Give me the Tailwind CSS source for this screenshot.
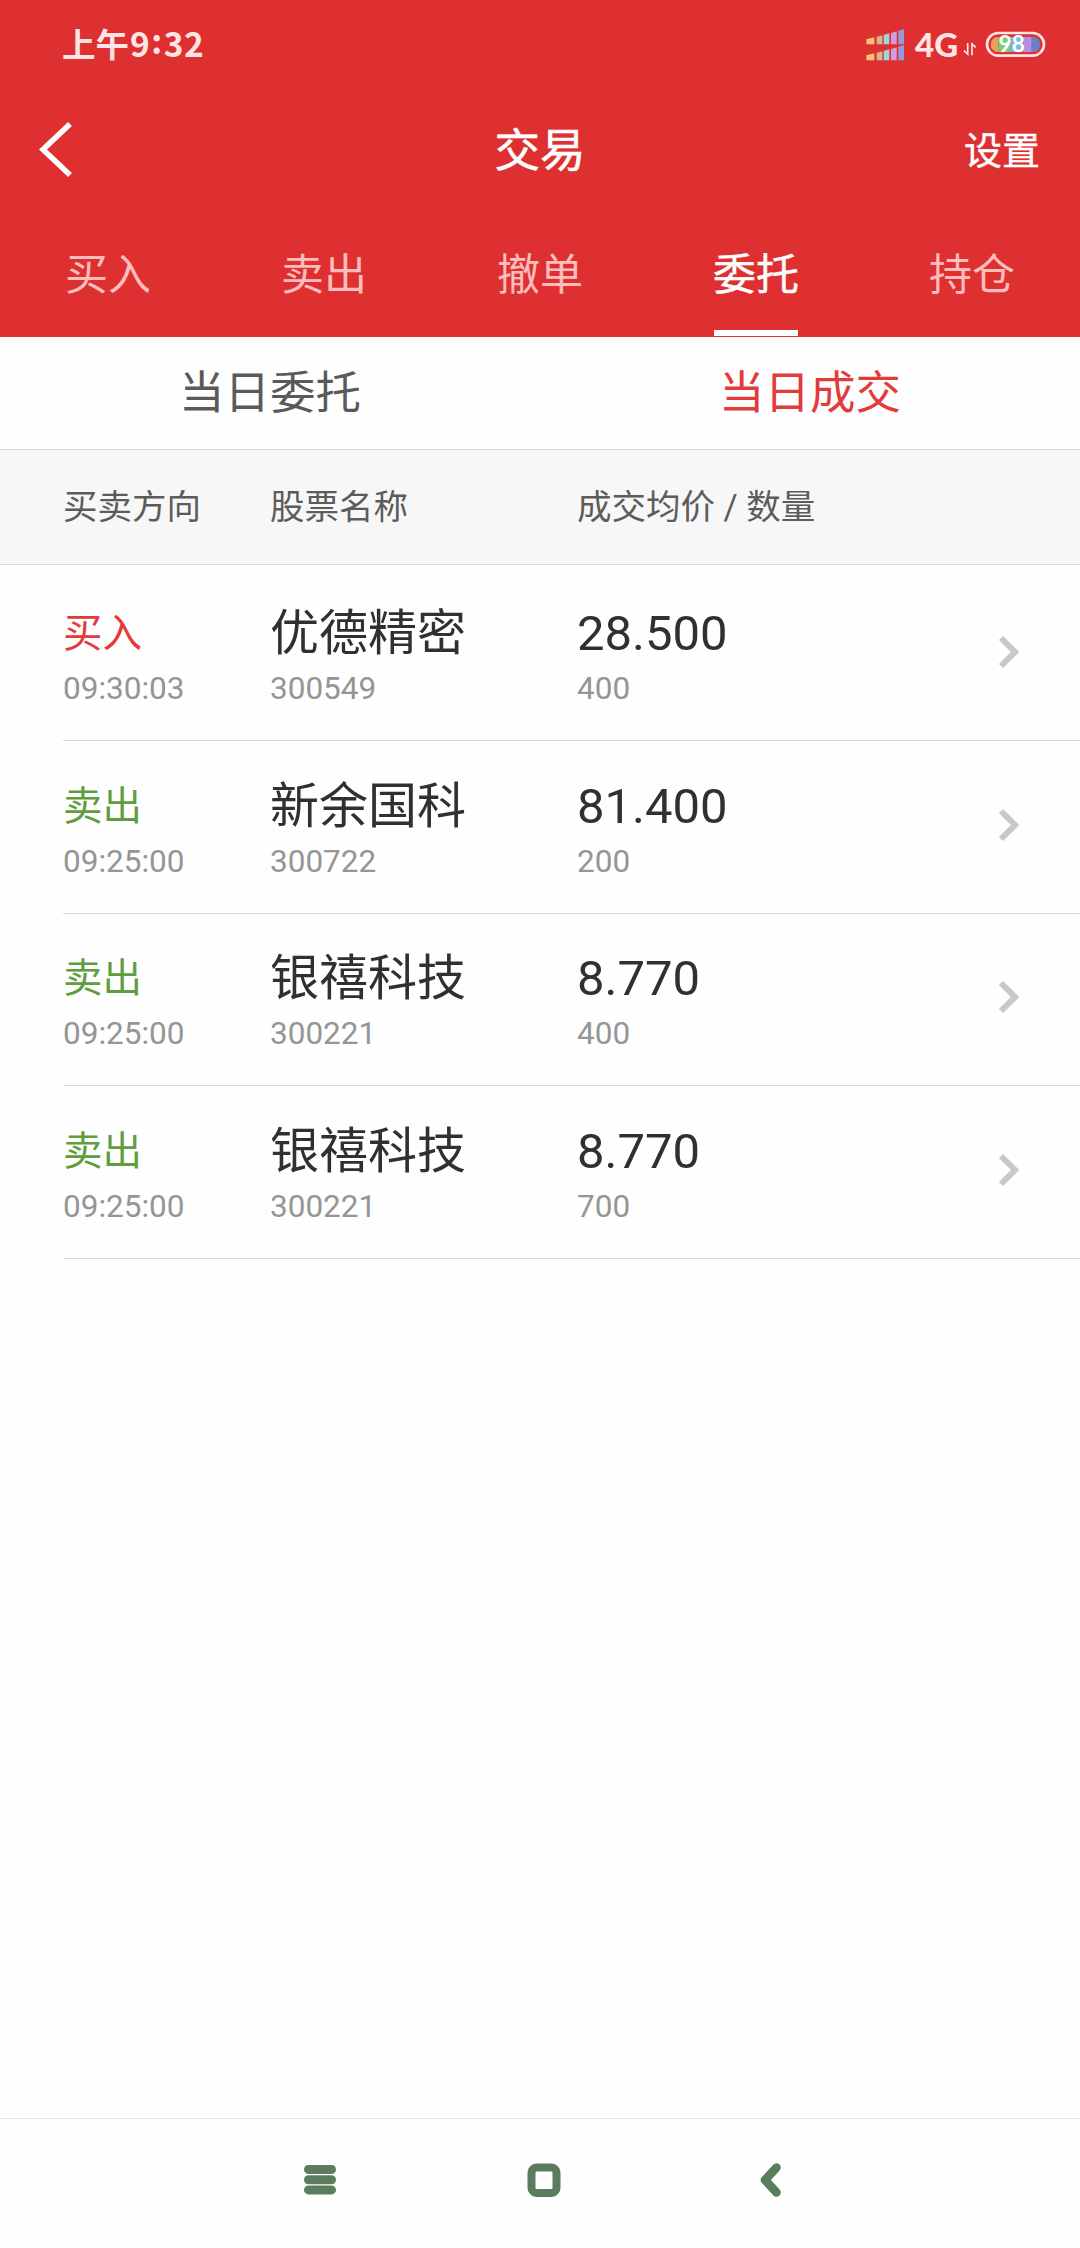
<!DOCTYPE html>
<html lang="zh-CN">
<head>
    <meta charset="UTF-8">
    <meta name="viewport" content="width=device-width, initial-scale=1.0">
    <title>交易</title>
    <script src="https://cdn.jsdelivr.net/npm/@tailwindcss/browser@4"></script>
</head>
<body class="bg-[#fefefe] font-[Roboto,'Noto_Sans_CJK_SC',sans-serif]">
    <div class="w-[1080px] h-[2248px] flex flex-col overflow-hidden">

        <header class="h-[337px] shrink-0 bg-[#df3031] text-white">
            <!-- status bar -->
            <div class="h-[90px] flex items-center justify-between pl-[62px] pr-[34px] text-[#ffe4e4]">
                <div class="flex items-center text-[33.5px] leading-[86px] pb-[4px] font-bold font-['Noto_Sans_CJK_SC',sans-serif]">
                    <span>上午</span>
                    <span class="ml-px tracking-[0.5px]">9<span class="relative -top-[3px] px-px">:</span>32</span>
                </div>
                <div class="flex items-center">
                    <svg class="w-[39px] h-[32px] mt-[-1px]" viewBox="0 0 117 96">
                        <g id="signal">
                            <path fill="#fbbf77" d="M1 31l24-6v21H1z"/>
                            <path fill="#cdb98b" d="M32 24l17-5v27H32z"/>
                            <path fill="#9ed3dc" d="M53 18l17-5v33H53z"/>
                            <path fill="#d59be0" d="M75 12l17-5v39H75z"/>
                            <path fill="#8f9bdd" d="M97 5l17-4v45H97z"/>
                        </g>
                        <use href="#signal" y="48"/>
                    </svg>
                    <span class="ml-[10px] w-[46px] text-[33px] leading-[88px] pb-[2px] font-black font-[Lato,sans-serif]">4G</span>
                    <svg class="ml-[2px] w-[14px] h-[14px] mt-[-6px] relative top-[7px]" viewBox="0 0 42 42" fill="none" stroke="#ffe4e4" stroke-width="5">
                        <path d="M3 26l11 10V3M27 40V6l11 10"/>
                    </svg>
                    <svg class="ml-[8px] w-[61px] h-[35px] mt-[-1px]" viewBox="0 -12 183 105">
                        <defs>
                            <clipPath id="fill"><rect x="17" y="17" width="149" height="47" rx="23"/></clipPath>
                        </defs>
                        <g clip-path="url(#fill)">
                            <path fill="#e7a458" d="M17 17h23v47H17z"/>
                            <path fill="#7fcb72" d="M40 17h36v47H40z"/>
                            <path fill="#77b9df" d="M76 17h40v47H76z"/>
                            <path fill="#b78fe6" d="M116 17h24v47h-24z"/>
                            <path fill="#6a80cc" d="M140 17h26v47h-26z"/>
                        </g>
                        <rect x="6" y="6" width="171" height="68" rx="34" fill="none" stroke="#ffe4e4" stroke-width="8"/>
                        <text x="80" y="63" text-anchor="middle" font-family="Lato" font-weight="700" font-size="68" fill="#fff">98</text>
                    </svg>
                </div>
            </div>

            <!-- title bar -->
            <div class="h-[120px] grid grid-cols-3 items-center">
                <svg class="ml-[38px] w-[36px] h-[60px]" viewBox="0 0 36 60" fill="none" stroke="#fff" stroke-width="5.500">
                    <path d="M32 4L5 29.500L32 55"/>
                </svg>
                <h1 class="pt-[5px] text-center text-[45.5px] [-webkit-text-stroke:0.6px_white]">交易</h1>
                <a class="pt-[3px] text-right pr-[40px] text-[38px] [-webkit-text-stroke:0.4px_white]">设置</a>
            </div>

            <!-- tabs -->
            <nav class="h-[126px] flex text-[43px] leading-[130px] text-[#fdbdbd] text-center">
                <a class="flex-1">买入</a>
                <a class="flex-1">卖出</a>
                <a class="flex-1">撤单</a>
                <a class="flex-1 flex justify-center">
                    <span class="w-[84px] h-[126px] flex justify-center whitespace-nowrap border-b-6 border-white text-white [-webkit-text-stroke:0.4px_white]">委托</span>
                </a>
                <a class="flex-1">持仓</a>
            </nav>
        </header>

        <div class="h-[113px] shrink-0 flex text-[45.5px] leading-[114px] text-center border-b border-[#dadada]">
            <a class="flex-1 text-[#5a5a5a]">当日委托</a>
            <a class="flex-1 text-[#e13b3c]">当日成交</a>
        </div>

        <div class="h-[115px] shrink-0 grid grid-cols-[207px_307px_1fr] pl-[63px] text-[34.5px] leading-[114px] text-[#5c5c5c] bg-[#f7f7f7] border-b border-[#dadada]">
            <span>买卖方向</span>
            <span>股票名称</span>
            <span>成交均价 / 数量</span>
        </div>

        <!-- trade list -->
        <ul class="pl-[63px] pt-[3px]">
            <li class="h-[173px] grid grid-cols-[207px_307px_1fr_82px] items-center border-b border-[#dadada]">
                <div class="pt-[6px]">
                    <p class="text-[39.5px] leading-[63px] text-[#e13b3c]">买入</p>
                    <p class="text-[31.5px] leading-[48px] text-[#959595]">09:30:03</p>
                </div>
                <div class="pt-[6px]">
                    <p class="text-[49px] leading-[63px] text-[#303030]">优德精密</p>
                    <p class="text-[31.5px] leading-[48px] text-[#959595]">300549</p>
                </div>
                <div class="pt-[6px]">
                    <p class="text-[49px] leading-[63px] text-[#303030]">28.500</p>
                    <p class="text-[31.5px] leading-[48px] text-[#959595]">400</p>
                </div>
                <svg class="w-[22px] h-[34px] mb-[5px]" viewBox="0 0 22 34" fill="none" stroke="#c8c8c8" stroke-width="6"><path d="M3 3l14 14L3 31"/></svg>
            </li>
            <li class="h-[173px] grid grid-cols-[207px_307px_1fr_82px] items-center border-b border-[#dadada]">
                <div class="pt-[6px]">
                    <p class="text-[39.5px] leading-[63px] text-[#5f9d3f]">卖出</p>
                    <p class="text-[31.5px] leading-[48px] text-[#959595]">09:25:00</p>
                </div>
                <div class="pt-[6px]">
                    <p class="text-[49px] leading-[63px] text-[#303030]">新余国科</p>
                    <p class="text-[31.5px] leading-[48px] text-[#959595]">300722</p>
                </div>
                <div class="pt-[6px]">
                    <p class="text-[49px] leading-[63px] text-[#303030]">81.400</p>
                    <p class="text-[31.5px] leading-[48px] text-[#959595]">200</p>
                </div>
                <svg class="w-[22px] h-[34px] mb-[5px]" viewBox="0 0 22 34" fill="none" stroke="#c8c8c8" stroke-width="6"><path d="M3 3l14 14L3 31"/></svg>
            </li>
            <li class="h-[172px] grid grid-cols-[207px_307px_1fr_82px] items-center border-b border-[#dadada]">
                <div class="pt-[6px]">
                    <p class="text-[39.5px] leading-[63px] text-[#5f9d3f]">卖出</p>
                    <p class="text-[31.5px] leading-[48px] text-[#959595]">09:25:00</p>
                </div>
                <div class="pt-[6px]">
                    <p class="text-[49px] leading-[63px] text-[#303030]">银禧科技</p>
                    <p class="text-[31.5px] leading-[48px] text-[#959595]">300221</p>
                </div>
                <div class="pt-[6px]">
                    <p class="text-[49px] leading-[63px] text-[#303030]">8.770</p>
                    <p class="text-[31.5px] leading-[48px] text-[#959595]">400</p>
                </div>
                <svg class="w-[22px] h-[34px] mb-[5px]" viewBox="0 0 22 34" fill="none" stroke="#c8c8c8" stroke-width="6"><path d="M3 3l14 14L3 31"/></svg>
            </li>
            <li class="h-[173px] grid grid-cols-[207px_307px_1fr_82px] items-center border-b border-[#dadada]">
                <div class="pt-[6px]">
                    <p class="text-[39.5px] leading-[63px] text-[#5f9d3f]">卖出</p>
                    <p class="text-[31.5px] leading-[48px] text-[#959595]">09:25:00</p>
                </div>
                <div class="pt-[6px]">
                    <p class="text-[49px] leading-[63px] text-[#303030]">银禧科技</p>
                    <p class="text-[31.5px] leading-[48px] text-[#959595]">300221</p>
                </div>
                <div class="pt-[6px]">
                    <p class="text-[49px] leading-[63px] text-[#303030]">8.770</p>
                    <p class="text-[31.5px] leading-[48px] text-[#959595]">700</p>
                </div>
                <svg class="w-[22px] h-[34px] mb-[5px]" viewBox="0 0 22 34" fill="none" stroke="#c8c8c8" stroke-width="6"><path d="M3 3l14 14L3 31"/></svg>
            </li>
        </ul>

        <!-- system navigation -->
        <footer class="mt-auto h-[130px] shrink-0 flex justify-center gap-[190px] pl-[8px] pt-[43px] border-t border-[#e4e4e4]">
            <svg class="w-[34px] h-[36px]" viewBox="0 0 34 36" fill="#5a7d5d">
                <rect x="1" y="3" width="32" height="9" rx="4.500"/>
                <rect x="1" y="13.200" width="32" height="9" rx="4.500"/>
                <rect x="1" y="23.400" width="32" height="9" rx="4.500"/>
            </svg>
            <svg class="w-[34px] h-[36px]" viewBox="0 0 34 36" fill="none" stroke="#5a7d5d" stroke-width="8">
                <rect x="4.500" y="5.500" width="25" height="25.500" rx="5"/>
            </svg>
            <svg class="w-[34px] h-[36px]" viewBox="0 0 34 36" fill="none" stroke="#5a7d5d" stroke-width="8.500" stroke-linecap="round" stroke-linejoin="round">
                <path d="M25.500 5.500L14 18L25.500 30.500"/>
            </svg>
        </footer>
    </div>
</body>
</html>
